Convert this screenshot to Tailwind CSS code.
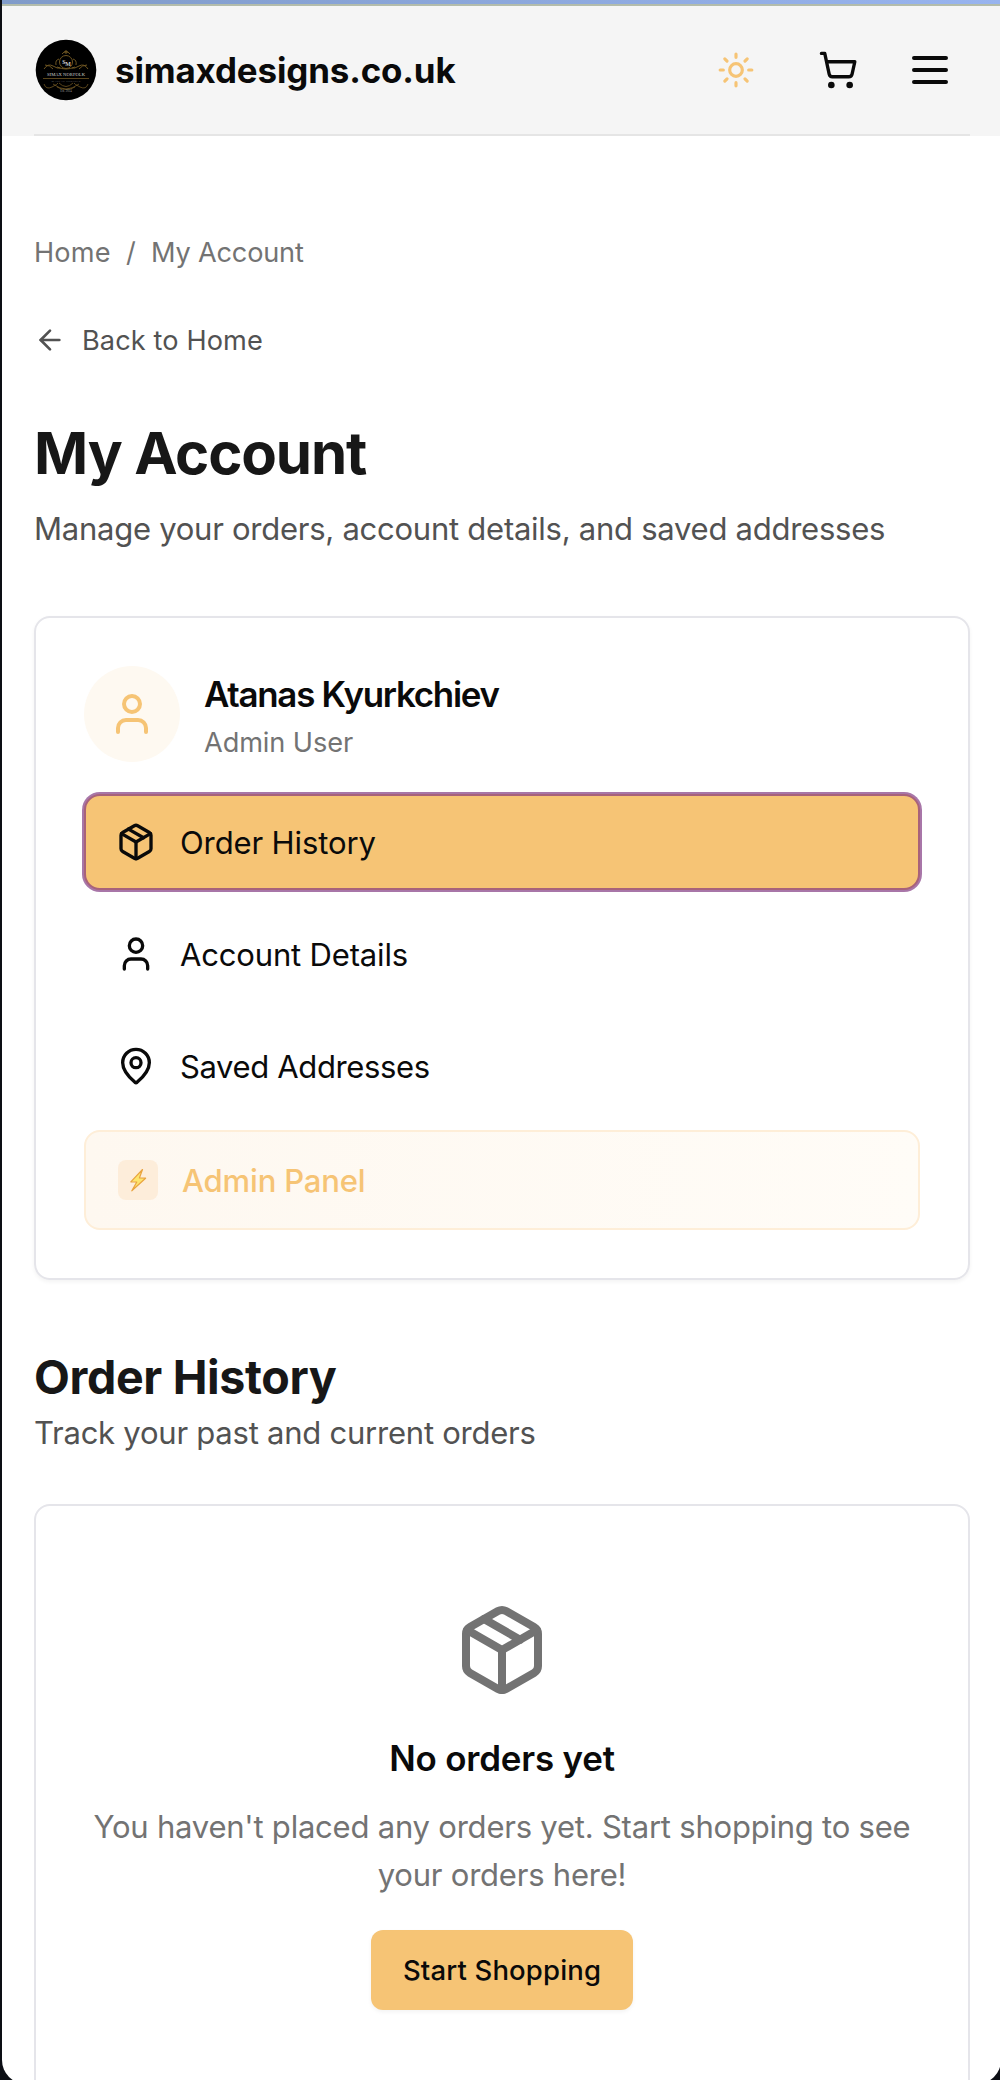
<!DOCTYPE html>
<html lang="en">
<head>
<meta charset="utf-8">
<title>My Account</title>
<script src="https://cdn.jsdelivr.net/npm/@tailwindcss/browser@4"></script>
</head>
<body class="h-[2080px] overflow-hidden bg-[#0c0e14] font-['Inter',sans-serif] text-[#0a0a0a]">
<svg class="hidden">
  <symbol id="package" viewBox="0 0 24 24"><path d="M11 21.73a2 2 0 0 0 2 0l7-4A2 2 0 0 0 21 16V8a2 2 0 0 0-1-1.73l-7-4a2 2 0 0 0-2 0l-7 4A2 2 0 0 0 3 8v8a2 2 0 0 0 1 1.73z"/><path d="M12 22V12"/><path d="m3.3 7 8.7 5 8.7-5"/><path d="m7.5 4.27 9 5.15"/></symbol>
  <symbol id="user" viewBox="0 0 24 24"><path d="M19 21v-2a4 4 0 0 0-4-4H9a4 4 0 0 0-4 4v2"/><circle cx="12" cy="7" r="4"/></symbol>
</svg>
<div class="ml-[2px] h-[2084px] w-[999px] overflow-hidden rounded-b-[24px] bg-white">
  <div class="h-[6px] border-b-2 border-[#b3bcab] bg-linear-to-r from-[#809bc9] to-[#98b4ef]"></div>
  <header class="bg-[#f5f5f5] pr-[31px] pl-8">
    <div class="flex h-[130px] items-center border-b-2 border-[#e5e5e5]">
      <svg class="ml-px size-[62px] shrink-0" viewBox="0 0 62 62">
        <circle cx="31" cy="31" r="30.3" fill="#000"/>
        <g fill="none" stroke="#6f5622" stroke-width="1">
          <circle cx="31" cy="23" r="6.5"/>
          <path d="M27 15q4-5 8 0M31 11v4M29 13h4M24 20q-4 1-3 6M38 20q4 1 3 6M9 30q4-6 9-3t7 2M53 30q-4-6-9-3t-7 2M10 26q5 0 8 4M52 26q-5 0-8 4M22 28q9 4 18 0"/>
          <path d="M8 39.5h46M9 45q2 6 8 3t6-4M53 45q-2 6-8 3t-6-4M18 45q13 10 26 0M22 48q9 5 18 0M24 44q7 7 14 0" stroke-width=".8"/>
        </g>
        <circle cx="31" cy="23" r="4.5" fill="#000"/>
        <g text-anchor="middle" fill="#ccc" font-family="Liberation Serif, serif">
          <text x="29" y="25" font-size="6" font-weight="700">S</text>
          <text x="33" y="27" font-size="6" font-weight="700">M</text>
          <text x="31" y="37" font-size="4.6" textLength="38">SIMAX NORFOLK</text>
          <text x="31" y="42.800" font-size="2.600" textLength="29" fill="#777">MADE IN NORFOLK</text>
          <text x="31" y="53" font-size="3" fill="#999">Est. 2024</text>
        </g>
      </svg>
      <span class="ml-[18px] text-[34.92px] leading-[56px] font-bold tracking-[-0.14px]">simaxdesigns.co.uk</span>
      <div class="ml-auto flex items-center pr-4">
        <svg class="mr-[63px] size-[38px]" viewBox="0 0 24 24" fill="none" stroke="#f6c475" stroke-width="2" stroke-linecap="round" stroke-linejoin="round"><circle cx="12" cy="12" r="4"/><path d="M12 2v2M12 20v2M4.93 4.93l1.41 1.41M17.66 17.66l1.41 1.41M2 12h2M20 12h2M6.34 17.66l-1.41 1.41M19.07 4.93l-1.41 1.41"/></svg>
        <svg class="mr-12 size-10" viewBox="0 0 24 24" fill="none" stroke="currentColor" stroke-width="2" stroke-linecap="round" stroke-linejoin="round"><circle cx="8" cy="21" r="1"/><circle cx="19" cy="21" r="1"/><path d="M2.05 2.05h2l2.66 12.42a2 2 0 0 0 2 1.58h9.78a2 2 0 0 0 1.95-1.57l1.65-7.43H5.12"/></svg>
        <svg class="size-12" viewBox="0 0 24 24" fill="none" stroke="currentColor" stroke-width="2" stroke-linecap="round"><path d="M4 6h16M4 12h16M4 18h16"/></svg>
      </div>
    </div>
  </header>

  <main class="pt-[97px] pr-[31px] pl-8">
    <nav class="flex text-[27.16px] leading-10 text-[#737373]">
      <span class="w-[92px] tracking-[0.18px]">Home</span>
      <span class="w-[25px]">/</span>
      <span class="tracking-[-0.2px]">My Account</span>
    </nav>
    <a class="mt-[47px] flex h-10 items-center gap-4 text-[27.16px] leading-10 tracking-[0.1px] text-[#525252]">
      <svg class="size-8" viewBox="0 0 24 24" fill="none" stroke="currentColor" stroke-width="2" stroke-linecap="round" stroke-linejoin="round"><path d="m12 19-7-7 7-7"/><path d="M19 12H5"/></svg>
      <span class="pt-0.5">Back to Home</span>
    </a>
    <h1 class="mt-[57px] text-[58.2px] leading-[72px] font-bold tracking-[-1.15px] text-[#171717]">My Account</h1>
    <p class="mt-4 text-[31.04px] leading-[48px] tracking-[-0.27px] whitespace-nowrap text-[#525252]">Manage your orders, account details, and saved addresses</p>

    <section class="mt-[63px] rounded-2xl border-2 border-[#e5e5ea] p-12 shadow-[0_2px_4px_rgba(0,0,0,0.05)]">
      <div class="flex h-24">
        <div class="flex size-24 items-center justify-center rounded-full bg-[#fef9f1]">
          <svg class="size-12" fill="none" stroke="#f6c475" stroke-width="2" stroke-linecap="round" stroke-linejoin="round"><use href="#user"/></svg>
        </div>
        <div class="ml-6">
          <div class="text-[34.92px] leading-[56px] font-semibold tracking-[-1.27px]">Atanas Kyurkchiev</div>
          <div class="mt-px text-[27.16px] leading-10 tracking-[-0.1px] text-[#737373]">Admin User</div>
        </div>
      </div>
      <div class="mt-8 flex flex-col gap-4 text-[31.04px] leading-[48px]">
        <a class="flex h-24 items-center gap-6 rounded-2xl border-2 border-[#a8627a] bg-[#f6c475] pl-[30px] tracking-[-0.13px] ring-2 ring-[#a876a8]">
          <svg class="size-10" fill="none" stroke="currentColor" stroke-width="2" stroke-linecap="round" stroke-linejoin="round"><use href="#package"/></svg>
          <span class="pt-0.5">Order History</span>
        </a>
        <a class="flex h-24 items-center gap-6 pl-8 tracking-[-0.18px]">
          <svg class="size-10" fill="none" stroke="currentColor" stroke-width="2" stroke-linecap="round" stroke-linejoin="round"><use href="#user"/></svg>
          <span class="pt-0.5">Account Details</span>
        </a>
        <a class="flex h-24 items-center gap-6 pl-8 tracking-[-0.38px]">
          <svg class="size-10" viewBox="0 0 24 24" fill="none" stroke="currentColor" stroke-width="2" stroke-linecap="round" stroke-linejoin="round"><path d="M20 10c0 4.993-5.539 10.193-7.399 11.799a1 1 0 0 1-1.202 0C9.539 20.193 4 14.993 4 10a8 8 0 0 1 16 0"/><circle cx="12" cy="10" r="3"/></svg>
          <span class="pt-0.5">Saved Addresses</span>
        </a>
        <a class="flex h-[100px] items-center gap-6 rounded-2xl border-2 border-[#feeed8] bg-linear-to-r from-[#fef8f0] to-[#fffcf7] pl-8 font-medium tracking-[-0.17px] text-[#f6c475]">
          <span class="flex size-10 items-center justify-center rounded-lg bg-[#fdedda]">
            <svg class="h-6 w-[18px]" viewBox="0 0 18 24"><path d="M13.500 1.500 1.800 13.800l6 .2-5 8.800L16.600 10.200l-6.200-.2z" fill="#fde56e" stroke="#e9a440" stroke-width="1.200" stroke-linejoin="round"/></svg>
          </span>
          <span class="pt-0.5">Admin Panel</span>
        </a>
      </div>
    </section>

    <h2 class="mt-[65px] text-[46.56px] leading-[64px] font-bold tracking-[-0.35px] text-[#171717]">Order History</h2>
    <p class="text-[31.04px] leading-[48px] tracking-[-0.25px] text-[#525252]">Track your past and current orders</p>

    <section class="mt-[47px] flex h-[640px] flex-col items-center rounded-2xl border-2 border-[#e5e5ea] px-12 pt-24 text-center">
      <svg class="size-24 shrink-0" fill="none" stroke="#737373" stroke-width="2" stroke-linecap="round" stroke-linejoin="round"><use href="#package"/></svg>
      <h3 class="mt-8 text-[34.92px] leading-[56px] font-semibold tracking-[-0.19px]">No orders yet</h3>
      <p class="mt-[17px] text-[31.04px] leading-[48px] tracking-[-0.23px] whitespace-nowrap text-[#737373]">You haven't placed any orders yet. Start shopping to see<br>your orders here!</p>
      <a class="mt-[31px] flex h-20 w-[262px] items-center justify-center rounded-xl bg-[#f6c475] text-[27.5px] font-medium tracking-[0.15px] shadow-[0_2px_4px_rgba(0,0,0,0.05)]"><span class="pt-0.5">Start Shopping</span></a>
    </section>
  </main>
</div>
</body>
</html>
